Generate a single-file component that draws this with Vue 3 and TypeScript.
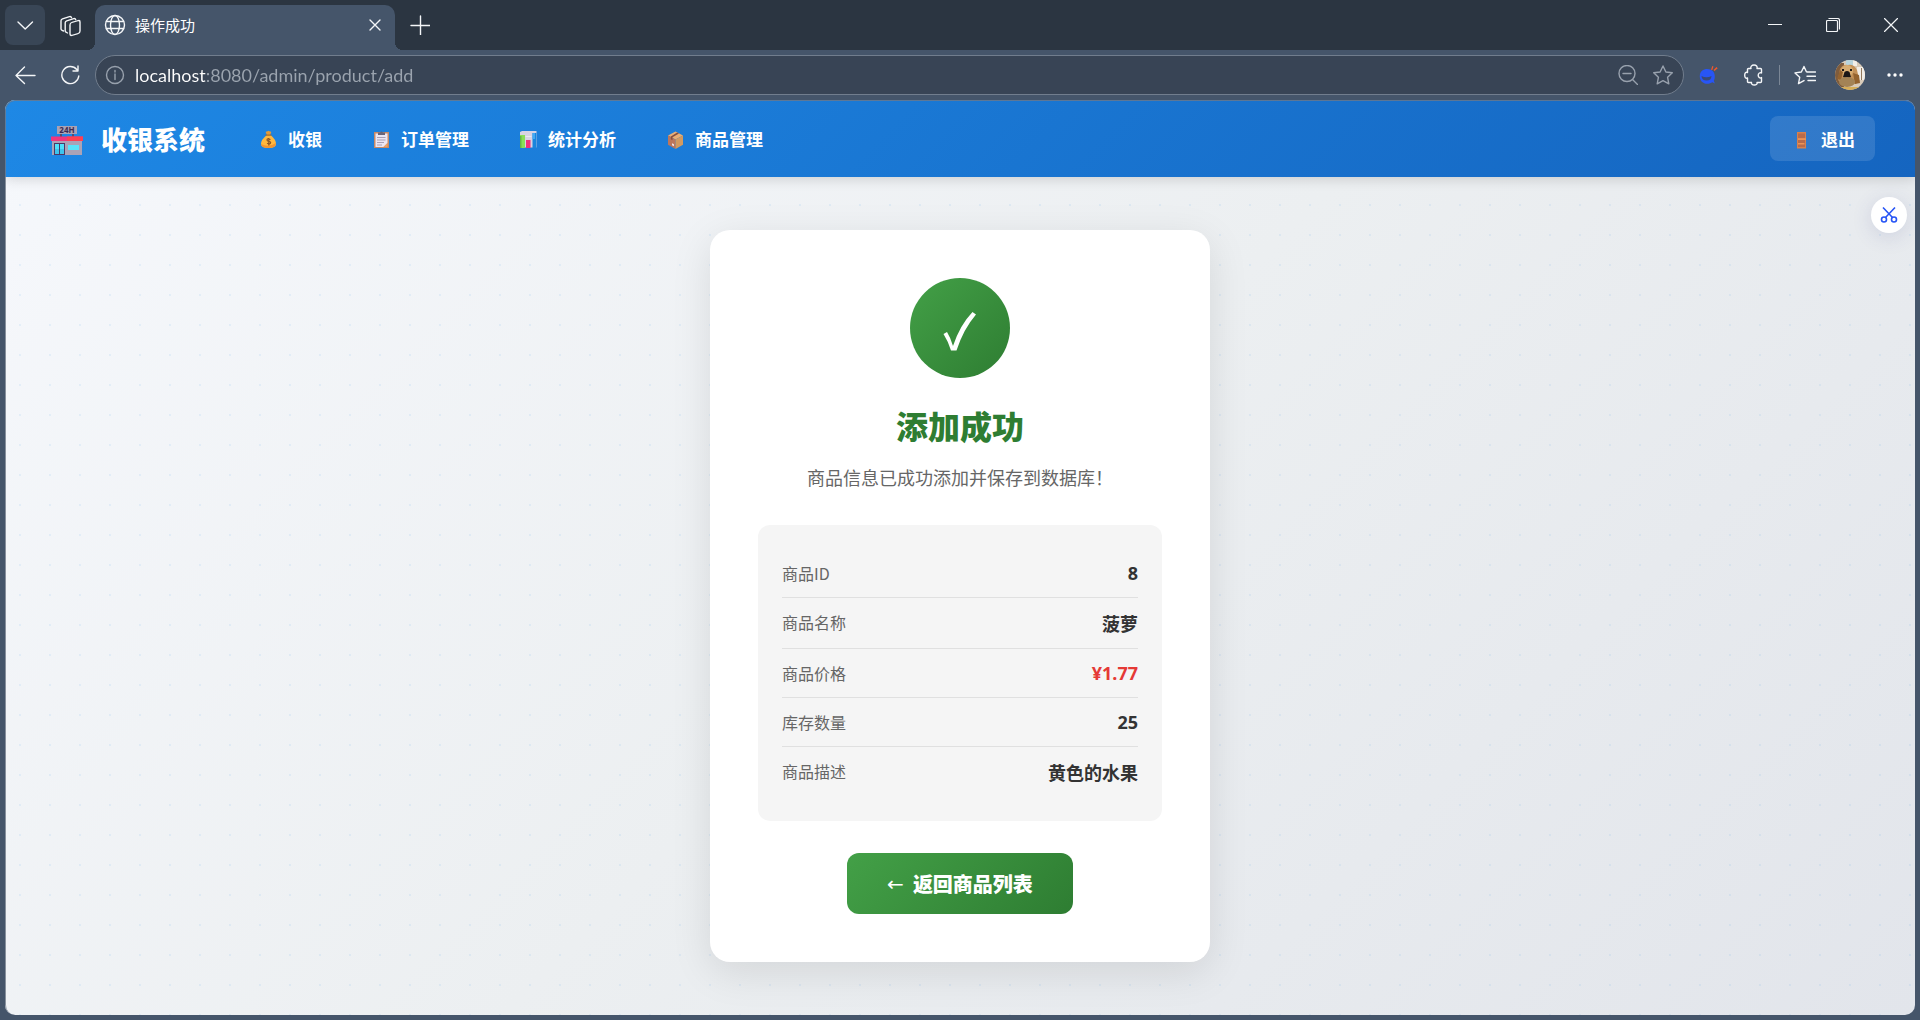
<script setup lang="ts">
import { ref } from 'vue'

type IconName = 'money' | 'orders' | 'stats' | 'goods'

interface NavItem {
  icon: IconName
  label: string
  href: string
}

interface DetailRow {
  label: string
  value: string
  kind: 'number' | 'text' | 'price'
}

const address = ref('localhost:8080/admin/product/add')

const navItems: NavItem[] = [
  { icon: 'money', label: '收银', href: '#cashier' },
  { icon: 'orders', label: '订单管理', href: '#orders' },
  { icon: 'stats', label: '统计分析', href: '#stats' },
  { icon: 'goods', label: '商品管理', href: '#products' },
]

const details: DetailRow[] = [
  { label: '商品ID', value: '8', kind: 'number' },
  { label: '商品名称', value: '菠萝', kind: 'text' },
  { label: '商品价格', value: '¥1.77', kind: 'price' },
  { label: '库存数量', value: '25', kind: 'number' },
  { label: '商品描述', value: '黄色的水果', kind: 'text' },
]
</script>

<template>
  <div class="browser">
    <div class="tabbar">
      <button class="tool tool-filled" type="button" aria-label="标签页操作">
        <svg width="20" height="20" viewBox="0 0 20 20"><path d="M3 7l7.200 7L17.500 7" /></svg>
      </button>
      <button class="tool" type="button" aria-label="工作区">
        <svg width="24" height="24" viewBox="0 0 24 24">
          <rect x="-5" y="-6.500" width="10" height="13" rx="2" transform="matrix(1 -.28 0 1 17 15)" />
          <path d="M9.500 20l-1.500-.8q-.8-.4-.8-1.400V9.800q0-1.500 1.500-2l7-2.200q1.600-.4 2 1" />
          <path d="M5.500 18l-1.700-.8q-.8-.4-.8-1.400V7.800q0-1.500 1.500-2l7-2.200q1.600-.4 2 1" />
        </svg>
      </button>
      <div class="tab">
        <svg width="22" height="22" viewBox="0 0 22 22">
          <circle cx="11" cy="11" r="9.500" /><ellipse cx="11" cy="11" rx="4.500" ry="9.500" />
          <path d="M2.500 7.500h17M2.500 14.500h17" />
        </svg>
        <span class="tab-title">操作成功</span>
        <button class="tab-close" type="button" aria-label="关闭标签页">
          <svg width="12" height="12" viewBox="0 0 12 12"><path d="M1 1l10 10M11 1L1 11" /></svg>
        </button>
      </div>
      <button class="tool" type="button" aria-label="新建标签页">
        <svg width="20" height="20" viewBox="0 0 20 20"><path d="M10.500 1v19M1 10.500h19" /></svg>
      </button>
      <div class="window-controls">
        <button type="button" aria-label="最小化">
          <svg width="14" height="14" viewBox="0 0 14 14"><path d="M0 6.500h14" /></svg>
        </button>
        <button type="button" aria-label="还原">
          <svg width="14" height="14" viewBox="0 0 14 14">
            <rect x=".5" y="2.500" width="11" height="11" rx="1" /><path d="M3 .5h8.500q2 0 2 2V11" />
          </svg>
        </button>
        <button type="button" aria-label="关闭">
          <svg width="14" height="14" viewBox="0 0 14 14"><path d="M.5.5l13 13M13.500.5l-13 13" /></svg>
        </button>
      </div>
    </div>

    <div class="toolbar">
      <button class="tool" type="button" aria-label="后退">
        <svg width="22" height="20" viewBox="0 0 22 20"><path d="M21 10.500H2M10.500 2L2 10.500l8.500 8" /></svg>
      </button>
      <button class="tool" type="button" aria-label="刷新">
        <svg width="20" height="20" viewBox="0 0 20 20"><path d="M18.800 11a8.500 8.500 0 1 1-2-6.500l1 1.200M18 1v5h-5" /></svg>
      </button>
      <label class="address">
        <svg class="dim" width="20" height="20" viewBox="0 0 20 20">
          <circle cx="10" cy="10" r="8.500" /><path d="M10 9v5.500M10 5.500v1.500" />
        </svg>
        <input v-model="address" type="text" aria-label="地址栏" />
        <svg class="dim" width="20" height="20" viewBox="0 0 20 20">
          <circle cx="9" cy="8.500" r="8" /><path d="M5 8.500h8M14.500 14.500l5 5" />
        </svg>
        <svg class="dim" width="22" height="20" viewBox="0 0 22 20">
          <path d="M11 1l2.900 6 6.400.8-4.700 4.500 1.200 6.500L11 15.700l-5.800 3.100 1.200-6.500L1.700 7.800 8.100 7z" />
        </svg>
      </label>
      <button class="tool" type="button" aria-label="助手扩展">
        <svg class="filled" width="20" height="20" viewBox="0 0 20 20">
          <path fill="#2855f5" d="M.8 11.200C.8 6.500 4.200 4 8.300 4c4.400 0 7.500 3 7.500 7.200 0 2-.5 3.500-1 4.500l1 2.800-2.300-1.300-3 1.300C5 19.600.8 16.500.8 11.200z" />
          <path fill="#384a78" d="M2.500 11q5 2.500 10 0-.2 4.500-4.900 4.500T2.500 11z" />
          <path fill="#f0572b" d="M12 4.700L13.300 1l1.200.6L13.300 5zM14.500 5l3-3 1.200 1.200L15.500 6z" />
        </svg>
      </button>
      <button class="tool" type="button" aria-label="扩展">
        <svg width="20" height="22" viewBox="1 0 20 22">
          <path d="M8 4.500C7.200 2.800 8.700 1 11 1s3.700 1.700 3 3.500h3.500q1 0 1 1V9c-1.300-.8-3.300 0-3.300 2.300s2 3.200 3.300 2.300v3.900q0 1-1 1H14c.7 1.300-.7 2.500-2.700 2.500S8 19.800 8.500 18.500H5.500q-1 0-1-1V14C2.800 14.800 1.700 13.400 1.700 11.300S2.800 7.800 4.500 8.500v-3q0-1 1-1z" />
        </svg>
      </button>
      <span class="divider"></span>
      <button class="tool" type="button" aria-label="收藏夹">
        <svg width="22" height="20" viewBox="0 0 22 20">
          <path d="M13.500 7L12.400 6.800 10 1.500 7.300 7 1 7.900l4.700 4.400-1.200 6.300 5.500-3M14 7h7.500M13 11.300h8.500M14 15.500h7.500" />
        </svg>
      </button>
      <button class="tool" type="button" aria-label="用户">
        <svg class="filled" width="30" height="30" viewBox="0 0 30 30">
          <clipPath id="avatar"><circle cx="15" cy="15" r="15" /></clipPath>
          <g clip-path="url(#avatar)">
            <path fill="#d9cbb9" d="M0 0h30v30H0z" />
            <path fill="#7f5c3c" d="M0 3h9v24H0z" /><path fill="#b8d4dc" d="M11 0h7v6h-7z" />
            <path fill="#f2eee8" d="M22 7h8v13h-8zM18 0h4v6h-4z" /><path fill="#92785c" d="M26 8h1v12h-1z" />
            <path fill="#c39158" d="M5 9Q8 4 13 5q6-1 9 5l2 9-3 5H7L3 20z" />
            <ellipse cx="12" cy="11" rx="6" ry="6" fill="#d8ad72" />
            <path fill="#94632f" d="M5 10l-3 9 4 1 2-8zM18 13l6 2 1 8-5 1z" />
            <path fill="#1b1717" d="M9.500 12q2.500-2 5 0l1.500 5q-4 2-8 0zM7 9h2v2H7zM15 9h2v2h-2z" />
            <ellipse cx="12" cy="22" rx="8" ry="5" fill="#a38356" /><path fill="#d6ae59" d="M4 27h20v3H4z" />
          </g>
        </svg>
      </button>
      <button class="tool" type="button" aria-label="更多">
        <svg class="filled" width="16" height="4" viewBox="0 0 16 4">
          <circle cx="2" cy="2" r="1.700" fill="#fff" /><circle cx="8" cy="2" r="1.700" fill="#fff" /><circle cx="14" cy="2" r="1.700" fill="#fff" />
        </svg>
      </button>
    </div>

    <div class="page">
      <header class="header">
        <a class="brand" href="#home">
          <svg width="44" height="36" viewBox="0 -4 44 36">
            <path fill="#a9a2b5" d="M12 0h20v8H12z" /><path fill="#5b4c6b" d="M15 8h2v3h-2zM27 8h2v3h-2z" />
            <text x="22" y="7" class="sign">24H</text>
            <path fill="#aaa3b7" d="M7 13h30v16H7z" /><path fill="#f0357e" d="M6 10.500h32V15H6z" />
            <path fill="#ff4050" d="M22 10.500h16V15H22z" />
            <path fill="#4c3867" d="M9 17h11v12H9z" /><path fill="#4ee0fa" d="M10 18h4v10h-4zM15 18h4v10h-4z" />
            <path fill="#3dc4ed" d="M10 23h4v5h-4zM15 23h4v5h-4z" />
            <path fill="#5ae4fa" d="M23 19h11v5H23z" />
          </svg>
          <span>收银系统</span>
        </a>
        <nav class="nav">
          <a v-for="item in navItems" :key="item.icon" class="nav-link" :href="item.href">
            <svg v-if="item.icon === 'money'" width="23" height="20" viewBox="0 0 23 20">
              <path fill="#e39a37" d="M9 3Q8 1 10 1.500L11.500.8 13 1.500q2-.5 1 1.500l-1.500 3h-2z" />
              <path fill="#ffb83e" d="M10 5h3.500Q19 9.500 19 14q0 4-7.500 4T4 14q0-4.500 6-9z" />
              <path fill="#f19432" d="M4 14q7.500 4 15-1 0 5-7.500 5T4 14z" /><path fill="#a56c2b" d="M8.500 4.500h6v1.200h-6z" />
              <path class="dollar" d="M13.500 9.500q-3.500-1.500-3.500.5 0 1 1.800 1.300 2 .3 1.900 1.500-.2 1.800-3.700.5M11.800 8v7.500" />
            </svg>
            <svg v-else-if="item.icon === 'orders'" width="23" height="20" viewBox="0 0 23 20">
              <path fill="#c88a67" d="M4 2h15v16H4z" /><path fill="#ece6f3" d="M5.500 3.500h12V13l-4 4h-8z" />
              <path fill="#f0a263" d="M17.500 13l-4 4h4z" /><path fill="#68657a" d="M8 5V2.500h2l1.500-1.300L13 2.500h2V5z" />
              <path class="lines" d="M7 7.500h8.500M7 10h8.500M7 12.500h7M7 15h5" />
            </svg>
            <svg v-else-if="item.icon === 'stats'" width="23" height="20" viewBox="0 0 23 20">
              <path fill="#d8d3e3" d="M3 2l2-1h14.500v16.500H3z" /><path fill="#fff" opacity=".5" d="M8.500 6h6v1h-6z" />
              <path fill="#8ade58" d="M3 5h5v13H3z" /><path fill="#66b846" d="M3 6h1.500v12H3z" />
              <path fill="#f1307c" d="M9 10h4.500v8H9z" /><path fill="#1985dd" d="M15.500 3h3.800v15h-3.800z" />
              <path fill="#43a9f4" d="M15.500 3h2.500v6h-2.500z" />
            </svg>
            <svg v-else width="23" height="20" viewBox="0 0 23 20">
              <path fill="#e8ae75" d="M11.500 1.500L19 5.500l-7.500 4L4 5.500z" /><path fill="#bd765b" d="M4 5.500l7.500 4V19L4 14.800z" />
              <path fill="#d39a5f" d="M19 5.500l-7.500 4V19l7.500-4.200z" />
              <path fill="#87503f" d="M13.200 2.400l1.800 1-6.500 3.800v3l-1.700-1V6.400z" />
              <path fill="#eee0e8" d="M8 13.200l2 1v2l-2-1z" />
            </svg>
            <span>{{ item.label }}</span>
          </a>
        </nav>
        <button class="logout" type="button">
          <svg width="23" height="20" viewBox="0 0 23 20">
            <path fill="#d6814e" d="M7 2h9v16.500H7z" /><path fill="#b86b4b" d="M8 3.500h7V8H8zM8 10h7v3H8zM8 14.500h7V17H8z" />
            <path fill="#f39a59" d="M8 8.500h8v1.200H8zM8 13.300h6v1H8z" />
          </svg>
          <span>退出</span>
        </button>
      </header>

      <main class="content">
        <section class="card">
          <div class="badge">
            <svg width="36" height="42" viewBox="0 0 36 42">
              <path fill="#fff" d="M1.500 23L5 21q3.500 5.500 6 14Q18 14 30.500 1l3.500 2.500Q21.500 18 14.500 39.500H9Q6.500 31 1.500 23z" />
            </svg>
          </div>
          <h1>添加成功</h1>
          <p class="message">商品信息已成功添加并保存到数据库！</p>
          <dl class="details">
            <div v-for="row in details" :key="row.label" class="row">
              <dt>{{ row.label }}</dt>
              <dd :class="row.kind">{{ row.value }}</dd>
            </div>
          </dl>
          <a class="return" href="#products"><span class="arrow">←</span><span>返回商品列表</span></a>
        </section>
      </main>

      <button class="snip" type="button" aria-label="截图">
        <svg width="18" height="18" viewBox="0 0 18 18">
          <circle cx="4" cy="13.500" r="2.500" /><circle cx="14" cy="13.500" r="2.500" />
          <path d="M3 1.500l9.500 10M15 1.500L5.500 11.500" />
        </svg>
      </button>
    </div>
  </div>
</template>

<style>
body {
  background: #45556a;
}
</style>

<style scoped>
.browser {
  display: flex;
  flex-direction: column;
  box-sizing: border-box;
  min-height: 100vh;
  padding-bottom: 5px;
  background: #45556a;
  font-family: "Noto Sans", "Noto Sans CJK SC", sans-serif;
}

button {
  padding: 0;
  border: 0;
  background: none;
  color: inherit;
  font: inherit;
}

a {
  color: inherit;
  text-decoration: none;
}

svg {
  display: block;
  flex: none;
}

.tabbar,
.toolbar {
  display: flex;
  align-items: center;
  gap: 5px;
  height: 50px;
  padding: 0 5px;
}

.tabbar {
  align-items: flex-start;
  height: 45px;
  padding: 5px 0 0 5px;
  background: #2b3541;
}

.tool {
  display: flex;
  flex: none;
  align-items: center;
  justify-content: center;
  width: 40px;
  height: 40px;
  border-radius: 8px;
}

.tool-filled {
  background: #394656;
}

.tabbar svg,
.toolbar svg:not(.filled) {
  fill: none;
  stroke: #f4f6f8;
  stroke-width: 1.4;
  stroke-linecap: round;
  stroke-linejoin: round;
}

.tabbar .window-controls svg {
  stroke-width: 1.2;
}

.tab {
  position: relative;
  display: flex;
  align-items: center;
  box-sizing: border-box;
  width: 300px;
  height: 45px;
  padding: 0 14px 5px 9px;
  border-radius: 10px 10px 0 0;
  background: #45556a;
  color: #fff;
}

.tab::before,
.tab::after {
  content: "";
  position: absolute;
  bottom: 0;
  width: 8px;
  height: 8px;
}

.tab::before {
  right: 100%;
  background: radial-gradient(circle at 0 0, transparent 8px, #45556a 8px);
}

.tab::after {
  left: 100%;
  background: radial-gradient(circle at 100% 0, transparent 8px, #45556a 8px);
}

.tab-title {
  flex: 1;
  margin-left: 9px;
  font-size: 15px;
  line-height: 24px;
}

.window-controls {
  display: flex;
  margin-left: auto;
}

.window-controls button {
  display: flex;
  align-items: center;
  justify-content: center;
  width: 58px;
  height: 40px;
}

.address {
  display: flex;
  flex: 1;
  align-items: center;
  gap: 14px;
  box-sizing: border-box;
  height: 40px;
  padding: 0 9px;
  border: 1px solid #717d8d;
  border-radius: 20px;
  background: #384455;
}

.toolbar svg.dim {
  stroke: #98a1ad;
}

.address input {
  flex: 1;
  min-width: 0;
  height: 30px;
  margin-left: -4px;
  padding: 0;
  border: 0;
  outline: 0;
  background: linear-gradient(90deg, #fff 71px, #9ba4af 71px);
  background-clip: text;
  color: transparent;
  font-family: Lato, sans-serif;
  font-size: 18px;
}

.divider {
  width: 1px;
  height: 20px;
  background: #7b8796;
}

.page {
  position: relative;
  display: flex;
  flex: 1;
  flex-direction: column;
  margin: 0 5px;
  overflow: hidden;
  border-radius: 10px;
  background:
    radial-gradient(circle at 50% 50%, rgba(30, 136, 229, 0.08) 1px, transparent 1px) 0 0 / 30px 30px,
    linear-gradient(135deg, #f6f8fc 0%, #eceff1 50%, #e2e5eb 100%);
}

.page::after {
  content: "";
  position: absolute;
  inset: 0;
  border: 1px solid rgba(110, 120, 135, 0.8);
  border-width: 1px 0 0 1px;
  border-radius: 10px;
  pointer-events: none;
}

.header {
  display: flex;
  align-items: center;
  padding: 16px 40px;
  background: linear-gradient(135deg, #1e88e5, #1565c0);
  box-shadow: 0 2px 12px rgba(0, 0, 0, 0.15);
  color: #fff;
  font-weight: 700;
}

.brand {
  display: flex;
  align-items: center;
  gap: 12px;
  padding-top: 2px;
  font-size: 26px;
  font-weight: 900;
  line-height: 40px;
}

.sign {
  fill: #3c2950;
  font-size: 8px;
  font-weight: 700;
  line-height: 8px;
  text-anchor: middle;
}

.nav {
  display: flex;
  gap: 8px;
  margin-left: 32px;
}

.nav-link,
.logout {
  display: flex;
  align-items: center;
  gap: 8px;
  box-sizing: border-box;
  height: 45px;
  padding: 2px 20px 0;
  border-radius: 8px;
  font-size: 17px;
  line-height: 25px;
}

.logout {
  margin-left: auto;
  background: rgba(255, 255, 255, 0.12);
}

.dollar {
  fill: none;
  stroke: #8b5627;
  stroke-width: 1.2;
}

.lines {
  stroke: #aaa1b6;
}

.content {
  display: flex;
  flex: 1;
  align-items: center;
  justify-content: center;
  padding: 40px 20px;
}

.card {
  display: flex;
  flex-direction: column;
  align-items: center;
  box-sizing: border-box;
  width: 100%;
  max-width: 500px;
  padding: 48px;
  border-radius: 20px;
  background: #fff;
  box-shadow: 0 10px 40px rgba(0, 0, 0, 0.1);
}

.badge {
  display: flex;
  align-items: center;
  justify-content: center;
  box-sizing: border-box;
  width: 100px;
  height: 100px;
  padding-top: 8px;
  border-radius: 50%;
  background: linear-gradient(135deg, #43a047, #2e7d32);
}

h1 {
  margin: 24px 0 12px;
  color: #2e7d32;
  font-size: 32px;
  font-weight: 900;
  line-height: 50px;
}

.message {
  margin: 0 0 32px;
  color: #666;
  font-size: 18px;
  line-height: 29px;
}

.details {
  align-self: stretch;
  margin: 0 0 32px;
  padding: 24px;
  border-radius: 12px;
  background: #f5f5f5;
}

.row {
  display: flex;
  justify-content: space-between;
  padding: 12px 0;
  border-bottom: 1px solid #e0e0e0;
}

.row:last-child {
  border-bottom: 0;
}

dt {
  color: #666;
  font-family: "Noto Sans CJK SC", sans-serif;
  font-size: 16px;
  line-height: 24px;
}

dd {
  margin: 0;
  color: #333;
  font-size: 18px;
  font-weight: 700;
  line-height: 24px;
}

dd.text {
  padding-top: 2px;
}

dd.price {
  color: #e53935;
}

.return {
  display: flex;
  align-items: center;
  gap: 9px;
  padding: 17px 40px 15px;
  border-radius: 12px;
  background: linear-gradient(135deg, #43a047, #2e7d32);
  color: #fff;
  font-size: 20px;
  font-weight: 900;
  line-height: 29px;
}

.arrow {
  font-family: "DejaVu Sans", sans-serif;
  font-weight: 400;
}

.snip {
  position: absolute;
  top: 97px;
  right: 8px;
  display: flex;
  align-items: center;
  justify-content: center;
  width: 36px;
  height: 36px;
  border-radius: 50%;
  background: #fff;
  box-shadow: 0 4px 20px rgba(60, 70, 140, 0.15);
}

.snip svg {
  fill: none;
  stroke: #2855f5;
  stroke-width: 1.6;
}
</style>
